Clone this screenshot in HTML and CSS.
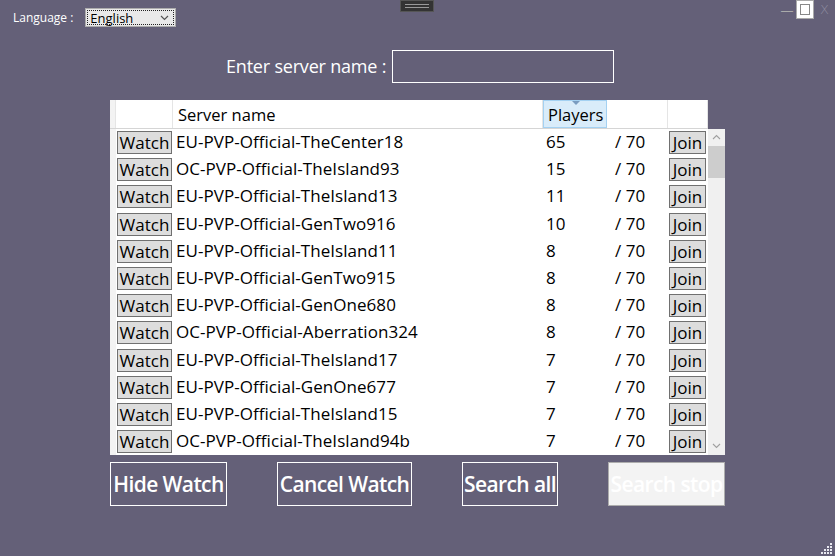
FILE: index.html
```html
<!DOCTYPE html>
<html>
<head>
<meta charset="utf-8">
<link rel="stylesheet" href="styles.css">
</head>
<body>
<div class="app">
  <div class="grip"><span></span><span></span></div>
  <div class="winctl">
    <span class="wc min">—</span>
    <span class="wc max"><i></i></span>
    <span class="wc close">X</span>
  </div>
  <div class="langbar">
    <span class="langlabel">Language :</span>
    <div class="select"><span>English</span><svg width="9" height="6" viewBox="0 0 9 6"><path d="M1 1 L4.5 4.5 L8 1" fill="none" stroke="#555" stroke-width="1.2"/></svg></div>
  </div>
  <div class="searchrow">
    <span class="searchlabel">Enter server name :</span>
    <div class="searchinput"></div>
  </div>
  <div class="grid">
    <div class="header">
      <div class="h rh"></div>
      <div class="h cw"></div>
      <div class="h cn">Server name</div>
      <div class="h cp sel">Players<svg class="sort" width="8" height="4" viewBox="0 0 8 4"><path d="M0 0 L8 0 L4 4 Z" fill="#7a9cc0"/></svg></div>
      <div class="h cm"></div>
      <div class="h cj"></div>
    </div>
    <div class="body">
      <div class="rows" id="rows"></div>
      <div class="scroll">
        <svg class="arr" width="9" height="6" viewBox="0 0 9 6"><path d="M1 5 L4.5 1.5 L8 5" fill="none" stroke="#a0a0a0" stroke-width="1.1"/></svg>
        <div class="track"><div class="thumb"></div></div>
        <svg class="arr" width="9" height="6" viewBox="0 0 9 6"><path d="M1 1 L4.5 4.5 L8 1" fill="none" stroke="#a0a0a0" stroke-width="1.1"/></svg>
      </div>
    </div>
  </div>
  <div class="actions">
    <button class="act a1">Hide Watch</button>
    <button class="act a2">Cancel Watch</button>
    <button class="act a3">Search all</button>
    <button class="act a4 disabled">Search stop</button>
  </div>
  <div class="resize">
    <svg width="14" height="14" viewBox="0 0 14 14" fill="#e8e8f0"><rect x="11" y="0" width="2" height="2"/><rect x="8" y="3" width="2" height="2"/><rect x="11" y="3" width="2" height="2"/><rect x="5" y="6" width="2" height="2"/><rect x="8" y="6" width="2" height="2"/><rect x="11" y="6" width="2" height="2"/><rect x="2" y="9" width="2" height="2"/><rect x="5" y="9" width="2" height="2"/><rect x="8" y="9" width="2" height="2"/><rect x="11" y="9" width="2" height="2"/></svg>
  </div>
</div>
<script>
var data=[["EU-PVP-Official-TheCenter18",65],["OC-PVP-Official-TheIsland93",15],["EU-PVP-Official-TheIsland13",11],["EU-PVP-Official-GenTwo916",10],["EU-PVP-Official-TheIsland11",8],["EU-PVP-Official-GenTwo915",8],["EU-PVP-Official-GenOne680",8],["OC-PVP-Official-Aberration324",8],["EU-PVP-Official-TheIsland17",7],["EU-PVP-Official-GenOne677",7],["EU-PVP-Official-TheIsland15",7],["OC-PVP-Official-TheIsland94b",7]];
var h="";
data.forEach(function(d){h+='<div class="row"><div class="c rh"></div><div class="c cw"><span class="btn">Watch</span></div><div class="c cn">'+d[0]+'</div><div class="c cp">'+d[1]+'</div><div class="c cm">/ 70</div><div class="c cj"><span class="btn">Join</span></div></div>';});
document.getElementById("rows").innerHTML=h;
</script>
</body>
</html>
```
FILE: styles.css
```css
html,body{margin:0;padding:0;}
body{width:835px;height:556px;overflow:hidden;background:#646078;font-family:"Open Sans","Noto Sans",sans-serif;}
.app{position:relative;width:835px;height:556px;}
.grip{position:absolute;left:400px;top:0;width:34px;height:12px;background:#333;box-sizing:border-box;border:1px solid #555;display:flex;flex-direction:column;justify-content:center;align-items:center;gap:2px;}
.grip span{display:block;width:24px;height:1px;background:#999;}
.winctl{position:absolute;right:0;top:0;display:flex;height:20px;}
.wc{width:18px;height:19px;display:flex;align-items:center;justify-content:center;color:#9a98aa;font-size:12px;box-sizing:border-box;}
.min{width:18px;color:#aaa;font-size:13px;}
.max{background:#fff;border:1px solid #aaa;}
.max i{display:block;width:8px;height:9px;border:1px solid #888;}
.close{width:21px;font-size:13px;color:#8e8ca0;font-family:"DejaVu Sans",sans-serif;font-weight:300;}
.langbar{display:flex;align-items:center;padding:8px 0 0 13px;height:19px;}
.langlabel{color:#fff;font-size:12px;font-family:"Open Sans",sans-serif;margin-right:12px;}
.select{width:91px;height:19px;box-sizing:border-box;background:#e9e9e9;border:1px solid #adadad;outline:1px dotted #222;outline-offset:-3px;display:flex;align-items:center;justify-content:space-between;padding:0 6px 0 4px;font-size:13px;color:#000;}
.searchrow{display:flex;align-items:center;justify-content:flex-start;margin:23px 0 0 226px;height:32px;}
.searchlabel{color:#fff;font-size:18px;margin-right:6px;letter-spacing:-0.2px;}
.searchinput{width:222px;height:33px;box-sizing:border-box;border:1px solid #fff;}
.grid{margin:18px 0 0 110px;width:615px;}
.header{display:flex;height:28px;width:598px;background:#fff;border-bottom:1px solid #d5d5d5;box-sizing:content-box;}
.h{height:28px;box-sizing:border-box;border-right:1px solid #e5e5e5;font-size:16.5px;color:#000;display:flex;align-items:center;padding-left:5px;position:relative;}
.h.rh{background:#f3f3f3;padding:0;}
.rh{width:6px;flex:none;}
.cw{width:57px;flex:none;}
.cn{width:370px;flex:none;}
.cp{width:64px;flex:none;}
.cm{width:61px;flex:none;}
.cj{width:40px;flex:none;}
.h.sel{background:#d9ecfa;border:1px solid #a4d1f2;padding-left:4px;}
.sort{position:absolute;left:28px;top:0;}
.body{display:flex;height:326px;background:#fff;}
.rows{width:591px;}
.row{display:flex;height:27.2px;align-items:center;}
.c{font-size:17px;color:#000;height:100%;display:flex;align-items:center;box-sizing:border-box;white-space:nowrap;letter-spacing:0.05px;padding-bottom:2px;}
.c.rh{background:#f3f3f3;}
.c.cn{padding-left:3px;}
.c.cp{padding-left:3px;}
.c.cm{padding-left:8px;}
.c.cw{padding-left:1px;padding-bottom:0;}
.c.cj{padding-left:1px;padding-bottom:0;}
.btn{display:inline-flex;align-items:center;justify-content:center;height:23px;box-sizing:border-box;background:#dddddd;border:1px solid #707070;font-size:17px;line-height:1;padding:0;}
.cw .btn{width:55px;}
.cj .btn{width:37px;}
.scroll{width:17px;margin-left:7px;background:#f0f0f0;display:flex;flex-direction:column;align-items:center;}
.arr{margin:5px 0 6px;flex:none;}
.track{flex:1;width:17px;}
.thumb{width:17px;height:32px;background:#cdcdcd;}
.actions{display:flex;margin:7px 0 0 110px;}
.act{height:44px;box-sizing:border-box;background:transparent;border:1px solid #fff;color:#fff;font-family:"Open Sans",sans-serif;font-weight:600;font-size:21px;padding:0;letter-spacing:-0.6px;white-space:nowrap;}
.a1{width:117px;}
.a2{width:135px;margin-left:50px;}
.a3{width:96px;margin-left:50px;}
.a4{width:117px;margin-left:50px;}
.act.disabled{background:#f3f3f3;border-color:#adadad;color:#fff;}
.resize{position:absolute;right:2px;bottom:2px;width:14px;height:14px;}
```
